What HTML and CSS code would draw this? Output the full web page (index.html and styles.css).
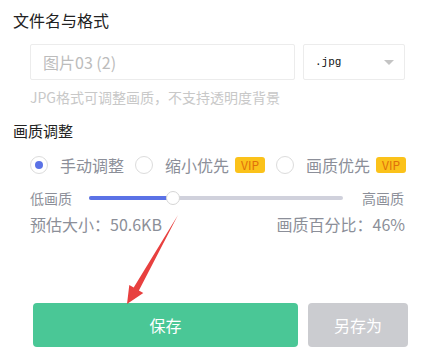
FILE: index.html
```html
<!DOCTYPE html>
<html lang="zh-CN">
<head>
    <meta charset="UTF-8">
    <title>保存图片</title>
    <link rel="stylesheet" href="styles.css">
</head>
<body>
    <div class="panel">
        <div class="title first">文件名与格式</div>
        <div class="file-row">
            <input class="name-input" type="text" placeholder="图片03 (2)">
            <div class="format-select">
                <span class="format-value">.jpg</span>
                <span class="caret"></span>
            </div>
        </div>
        <div class="hint">JPG格式可调整画质，不支持透明度背景</div>

        <div class="title second">画质调整</div>
        <div class="radio-row">
            <label class="radio checked"><span class="dot"></span>手动调整</label>
            <label class="radio"><span class="dot"></span>缩小优先<span class="vip">VIP</span></label>
            <label class="radio"><span class="dot"></span>画质优先<span class="vip">VIP</span></label>
        </div>
        <div class="slider-row">
            <span class="end-label">低画质</span>
            <div class="track">
                <div class="fill" style="width: 33%"></div>
                <div class="thumb" style="left: 33%"></div>
            </div>
            <span class="end-label">高画质</span>
        </div>
        <div class="stats">
            <span>预估大小：50.6KB</span>
            <span>画质百分比：46%</span>
        </div>

        <div class="actions">
            <button class="btn save">保存</button>
            <button class="btn save-as">另存为</button>
        </div>

        <svg class="arrow" width="432" height="353" viewBox="0 0 432 353">
            <polygon points="178,215 138.9,290.5 143.3,292.9 127,304 129.3,285.1 133.7,287.5" fill="#e8403f"/>
        </svg>
    </div>
</body>
</html>
```

FILE: styles.css
```css
body {
    margin: 0;
    background: #ffffff;
    font-family: "Noto Sans CJK SC", "Noto Sans", sans-serif;
}

.panel {
    position: relative;
    width: 432px;
    height: 353px;
    overflow: hidden;
}

.title {
    margin-left: 13px;
    color: #222;
}

.title.first {
    padding-top: 8px;
    font-size: 16px;
    line-height: 24px;
}

.title.second {
    margin-top: 14px;
    font-size: 15px;
    line-height: 22px;
}

.file-row {
    display: flex;
    gap: 8px;
    margin: 12px 0 0 30px;
}

.name-input {
    box-sizing: border-box;
    width: 265px;
    height: 36px;
    padding: 0 12px;
    border: 1px solid #ececec;
    border-radius: 2px;
    font-family: inherit;
    font-size: 16px;
    color: #333;
    outline: none;
}

.name-input::placeholder {
    color: #bcbcbc;
}

.format-select {
    box-sizing: border-box;
    width: 102px;
    height: 36px;
    border: 1px solid #ececec;
    border-radius: 2px;
    display: flex;
    align-items: center;
    justify-content: space-between;
    padding: 0 10px 0 11px;
}

.format-value {
    font-family: "Liberation Mono", monospace;
    font-size: 11px;
    color: #111;
}

.caret {
    width: 0;
    height: 0;
    border-left: 5px solid transparent;
    border-right: 5px solid transparent;
    border-top: 5px solid #c4c4c4;
}

.hint {
    margin: 8px 0 0 30px;
    font-size: 14px;
    line-height: 18px;
    color: #c8c8c8;
}

.radio-row {
    display: flex;
    align-items: center;
    margin: 13px 0 0 30px;
    height: 20px;
}

.radio {
    display: flex;
    align-items: center;
    font-size: 16px;
    color: #8c8f99;
    margin-right: 11px;
}

.dot {
    box-sizing: border-box;
    width: 18px;
    height: 18px;
    border: 1px solid #dcdcdc;
    border-radius: 50%;
    margin-right: 12px;
    display: flex;
    align-items: center;
    justify-content: center;
}

.radio.checked .dot::after {
    content: "";
    width: 8px;
    height: 8px;
    border-radius: 50%;
    background: #5b72e6;
}

.vip {
    margin-left: 6px;
    width: 30px;
    height: 16px;
    border-radius: 3px;
    background: #fbc21a;
    color: #e0700a;
    font-size: 12px;
    line-height: 16px;
    text-align: center;
}

.slider-row {
    display: flex;
    align-items: center;
    margin: 15px 0 0 30px;
    width: 374px;
    height: 16px;
}

.end-label {
    font-size: 14px;
    color: #8c8f99;
}

.track {
    position: relative;
    flex: 1;
    height: 4px;
    margin: 0 19px 0 17px;
    border-radius: 2px;
    background: #d0d1dc;
}

.fill {
    height: 100%;
    border-radius: 2px;
    background: #5b72e6;
}

.thumb {
    position: absolute;
    top: -5px;
    width: 12px;
    height: 12px;
    margin-left: -7px;
    border: 1px solid #d6d6d6;
    border-radius: 50%;
    background: #fff;
}

.stats {
    display: flex;
    justify-content: space-between;
    margin: 7px 0 0 30px;
    width: 375px;
    font-size: 16px;
    line-height: 22px;
    color: #8c8f99;
}

.actions {
    display: flex;
    gap: 10px;
    margin: 68px 0 0 33px;
}

.btn {
    height: 44px;
    border: none;
    border-radius: 4px;
    color: #fff;
    font-family: inherit;
    font-size: 16px;
}

.btn.save {
    width: 265px;
    background: #4ac796;
}

.btn.save-as {
    width: 100px;
    background: #cbccd0;
}

.arrow {
    position: absolute;
    left: 0;
    top: 0;
    pointer-events: none;
}
```
